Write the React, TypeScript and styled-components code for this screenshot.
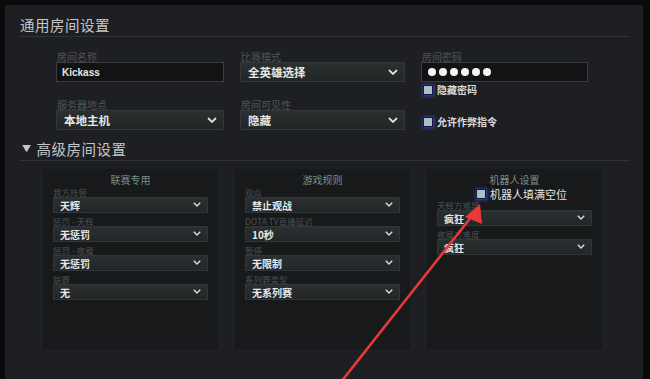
import { createGlobalStyle, styled } from "styled-components";

const GlobalStyle = createGlobalStyle`
  html, body {
    margin: 0;
    padding: 0;
    background: #0b0b0c;
  }
  body {
    width: 650px;
    height: 379px;
    overflow: hidden;
    font-family: "Noto Sans CJK SC", "Noto Sans", sans-serif;
  }
`;

const leagueFields = [
  { label: "我方阵营", value: "天辉" },
  { label: "惩罚 - 天辉", value: "无惩罚" },
  { label: "惩罚 - 夜魇", value: "无惩罚" },
  { label: "联赛", value: "无" },
];

const ruleFields = [
  { label: "观众", value: "禁止观战" },
  { label: "DOTA TV直播延迟", value: "10秒" },
  { label: "暂停", value: "无限制" },
  { label: "系列赛类型", value: "无系列赛" },
];

const botFields = [
  { label: "天辉方难度", value: "疯狂" },
  { label: "夜魇方难度", value: "疯狂" },
];

function Chevron({ size }: { size: number }) {
  return (
    <ChevronIcon width={size} height={size * 0.65} viewBox="0 0 10 6.5">
      <path d="M1 1 L5 5 L9 1" fill="none" stroke="#d8dcdc" strokeWidth="1.8" />
    </ChevronIcon>
  );
}

function Check({ label }: { label: string }) {
  return (
    <CheckRow>
      <CheckBox />
      <span>{label}</span>
    </CheckRow>
  );
}

function SmallSelect({ label, value }: { label: string; value: string }) {
  return (
    <SmallField>
      <SmallLabel>{label}</SmallLabel>
      <SmallBox>
        <span>{value}</span>
        <Chevron size={8} />
      </SmallBox>
    </SmallField>
  );
}

export default function App() {
  return (
    <>
      <GlobalStyle />
      <Frame>
        <Panel>
          <Heading>通用房间设置</Heading>
          <GeneralGrid>
            <Field>
              <Label>房间名称</Label>
              <TextInput>Kickass</TextInput>
            </Field>
            <Field>
              <Label>比赛模式</Label>
              <BigSelect>
                <span>全英雄选择</span>
                <Chevron size={10} />
              </BigSelect>
            </Field>
            <PasswordColumn>
              <Label>房间密码</Label>
              <TextInput>
                <Dots>
                  {Array.from({ length: 6 }).map((_, i) => (
                    <Dot key={i} />
                  ))}
                </Dots>
              </TextInput>
              <CheckSlot $top={2}>
                <Check label="隐藏密码" />
              </CheckSlot>
              <CheckSlot $top={20}>
                <Check label="允许作弊指令" />
              </CheckSlot>
            </PasswordColumn>
            <Field>
              <Label>服务器地点</Label>
              <BigSelect>
                <span>本地主机</span>
                <Chevron size={10} />
              </BigSelect>
            </Field>
            <Field>
              <Label>房间可见性</Label>
              <BigSelect>
                <span>隐藏</span>
                <Chevron size={10} />
              </BigSelect>
            </Field>
          </GeneralGrid>

          <Heading $advanced>
            <Caret>▼</Caret>
            高级房间设置
          </Heading>
          <BoxRow>
            <Box>
              <BoxTitle>联赛专用</BoxTitle>
              {leagueFields.map((f) => (
                <SmallSelect key={f.label} {...f} />
              ))}
            </Box>
            <Box>
              <BoxTitle>游戏规则</BoxTitle>
              {ruleFields.map((f) => (
                <SmallSelect key={f.label} {...f} />
              ))}
            </Box>
            <Box>
              <BoxTitle>机器人设置</BoxTitle>
              <BotCheck>
                <Check label="机器人填满空位" />
              </BotCheck>
              {botFields.map((f) => (
                <SmallSelect key={f.label} {...f} />
              ))}
            </Box>
          </BoxRow>
        </Panel>
        <Arrow width="650" height="379" viewBox="0 0 650 379">
          <line x1="341" y1="382" x2="472" y2="216" stroke="#e8393a" strokeWidth="2.6" />
          <polygon points="480,204 482,224 465,217" fill="#e8393a" />
        </Arrow>
      </Frame>
    </>
  );
}

const Frame = styled.div`
  position: relative;
  width: 650px;
  height: 379px;
  padding: 5px 7px 0 5px;
  box-sizing: border-box;
`;

const Panel = styled.div`
  height: 374px;
  box-sizing: border-box;
  background: #1e1f22;
  padding: 10px 13px 0 15px;
`;

const Heading = styled.div<{ $advanced?: boolean }>`
  display: flex;
  align-items: center;
  height: 20px;
  font-size: 14.5px;
  line-height: 20px;
  color: #c4c6c8;
  letter-spacing: 0.5px;
  padding-left: ${(p) => (p.$advanced ? "2px" : "0")};
  margin-top: ${(p) => (p.$advanced ? "9px" : "0")};
  border-bottom: 1px solid #303236;
  padding-bottom: 1px;
`;

const Caret = styled.span`
  font-size: 9px;
  color: #c4c6c8;
  margin-right: 5px;
`;

const GeneralGrid = styled.div`
  display: grid;
  grid-template-columns: 168px 165px 167px;
  grid-template-rows: auto auto;
  column-gap: 16px;
  row-gap: 17px;
  padding-left: 36px;
  margin-top: 14px;
`;

const Field = styled.div`
  display: flex;
  flex-direction: column;
`;

const PasswordColumn = styled.div`
  grid-column: 3;
  grid-row: 1 / span 2;
  display: flex;
  flex-direction: column;
`;

const Label = styled.div`
  height: 11px;
  font-size: 10px;
  line-height: 11px;
  color: #4f5456;
  padding-left: 1px;
`;

const TextInput = styled.div`
  height: 20px;
  box-sizing: border-box;
  background: #121314;
  border: 1px solid #3a3e3f;
  display: flex;
  align-items: center;
  padding-left: 5px;
  font-size: 10px;
  font-weight: 700;
  color: #e6e6e6;
  font-family: "Liberation Sans", Arial, sans-serif;
`;

const Dots = styled.div`
  display: flex;
  gap: 3px;
  padding-left: 1px;
`;

const Dot = styled.span`
  width: 8px;
  height: 8px;
  border-radius: 50%;
  background: #f4f4f4;
`;

const BigSelect = styled.div`
  height: 20px;
  box-sizing: border-box;
  background: linear-gradient(#2a2f2f, #222626);
  border: 1px solid #323838;
  display: flex;
  align-items: center;
  justify-content: space-between;
  padding: 0 6px 0 7px;
  font-size: 11.5px;
  font-weight: 700;
  color: #e8e8e8;
`;

const ChevronIcon = styled.svg`
  display: block;
`;

const CheckSlot = styled.div<{ $top: number }>`
  margin-top: ${(p) => p.$top}px;
  padding-left: 2px;
`;

const CheckRow = styled.div`
  display: flex;
  align-items: center;
  gap: 4px;
  font-size: 10px;
  line-height: 12px;
  font-weight: 700;
  color: #dadcdc;
`;

const CheckBox = styled.span`
  width: 8px;
  height: 8px;
  background: #a9c0c2;
  border: 1px solid #15173a;
  box-shadow: 0 0 3px 1.5px #3a3fa8;
`;

const BoxRow = styled.div`
  display: flex;
  gap: 15px;
  padding-left: 22px;
  margin-top: 7px;
`;

const Box = styled.div`
  width: 177px;
  height: 182px;
  box-sizing: border-box;
  background: #17191b;
  border: 1px solid #1c1f21;
  padding: 5px 10px 0 10px;
  display: flex;
  flex-direction: column;
`;

const BoxTitle = styled.div`
  text-align: center;
  font-size: 10px;
  line-height: 12px;
  color: #7a918c;
  margin-bottom: 1px;
`;

const BotCheck = styled.div`
  display: flex;
  justify-content: center;
  padding-left: 14px;
  margin-top: 1px;
  margin-bottom: 0;
  & > div {
    font-size: 11px;
    font-weight: 400;
    color: #e4e6e6;
    gap: 4px;
  }
`;

const SmallField = styled.div`
  display: flex;
  flex-direction: column;
  margin-bottom: 3px;
`;

const SmallLabel = styled.div`
  height: 10px;
  font-size: 8.5px;
  line-height: 10px;
  color: #4a5052;
`;

const SmallBox = styled.div`
  height: 16px;
  box-sizing: border-box;
  background: linear-gradient(#2a2f2f, #222626);
  border: 1px solid #30363a;
  display: flex;
  align-items: center;
  justify-content: space-between;
  padding: 0 6px 0 6px;
  font-size: 10px;
  font-weight: 700;
  color: #e8e8e8;
`;

const Arrow = styled.svg`
  position: absolute;
  left: 0;
  top: 0;
  pointer-events: none;
`;
